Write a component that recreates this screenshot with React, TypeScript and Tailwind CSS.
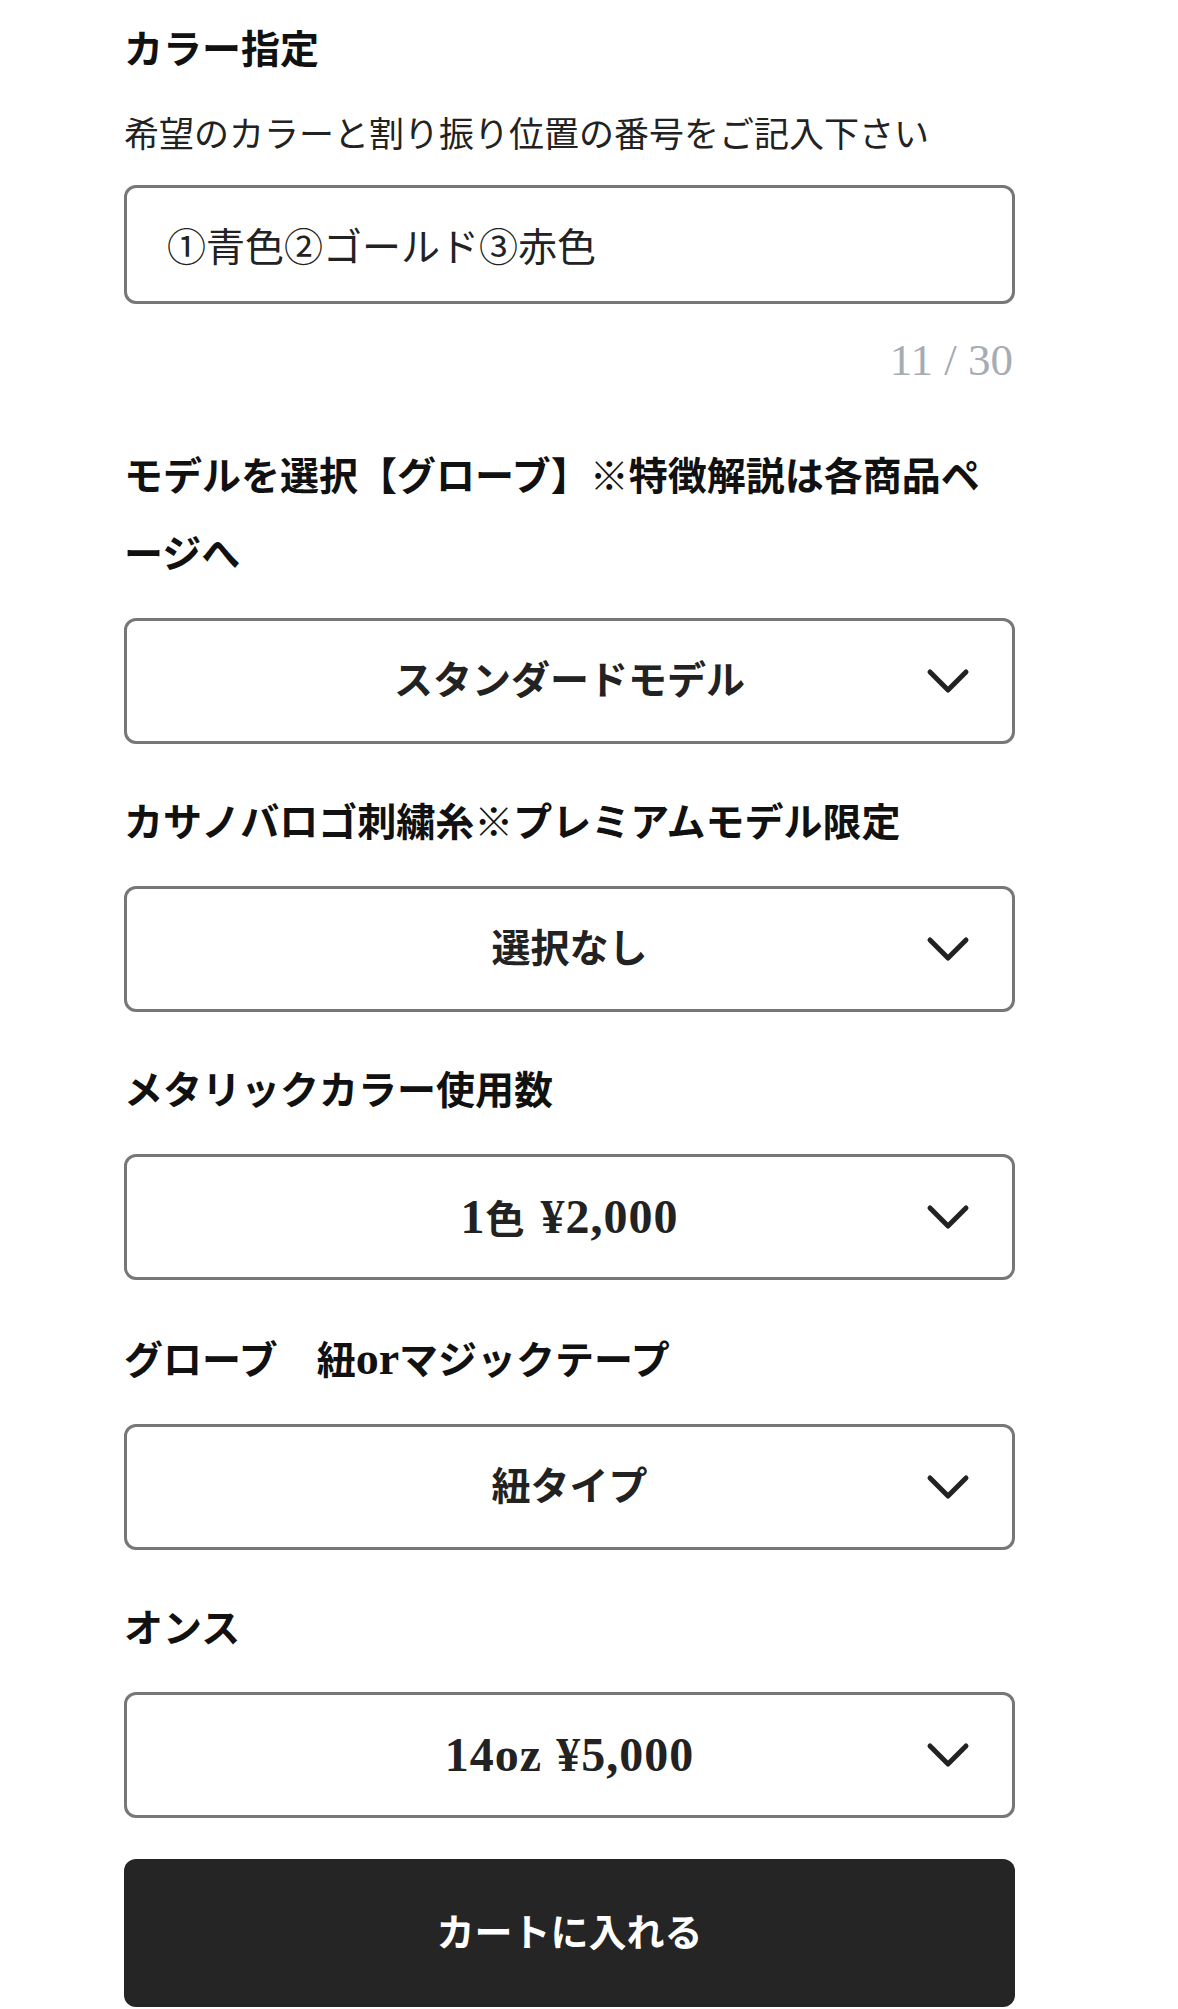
const jp = "font-['Liberation_Serif','Noto_Sans_CJK_JP',serif]";

function Chevron() {
  return (
    <svg width="44" height="26" viewBox="0 0 44 26" className="absolute right-[42px] top-1/2 -translate-y-1/2">
      <polyline points="4,4 22,22 40,4" fill="none" stroke="#222222" strokeWidth="5" strokeLinecap="round" strokeLinejoin="round" />
    </svg>
  );
}

function Label({ children, className = "" }: { children: React.ReactNode; className?: string }) {
  return <p className={`text-[39px] leading-[78px] font-bold text-[#111111] ${className}`}>{children}</p>;
}

function Select({ value }: { value: React.ReactNode }) {
  return (
    <div className="relative mt-[24px] h-[126px] w-full rounded-[12px] border-[3px] border-[#777777] bg-white flex items-center justify-center">
      <span className="text-[39px] font-bold text-[#222222] flex items-baseline">{value}</span>
      <Chevron />
    </div>
  );
}

const latin = "text-[48px] tracking-[1px]";

export default function App() {
  const options = [
    { label: "カサノバロゴ刺繍糸※プレミアムモデル限定", value: "選択なし" },
    {
      label: "メタリックカラー使用数",
      value: (
        <>
          <span className={latin}>1</span>色<span className={`${latin} ml-[16px]`}>¥2,000</span>
        </>
      ),
    },
    {
      label: (
        <>
          グローブ　紐<span className="text-[46px]">or</span>マジックテープ
        </>
      ),
      value: "紐タイプ",
    },
    {
      label: "オンス",
      value: (
        <>
          <span className={latin}>14oz</span>
          <span className={`${latin} ml-[14px]`}>¥5,000</span>
        </>
      ),
    },
  ];

  return (
    <div className={`min-h-[2009px] bg-white ${jp}`}>
      <div className="ml-[124px] w-[891px] pt-[11px]">
        <Label>カラー指定</Label>
        <p className="mt-[17px] text-[35px] leading-[60px] text-[#222222]">希望のカラーと割り振り位置の番号をご記入下さい</p>
        <div className="mt-[19px] h-[119px] w-full rounded-[12px] border-[3px] border-[#777777] flex items-center pl-[40px]">
          <span className="font-['Noto_Sans_CJK_JP',sans-serif] text-[39px] text-[#222222]">①青色②ゴールド③赤色</span>
        </div>
        <p className="mt-[26px] text-right pr-[2px] text-[45px] leading-[60px] text-[#a6abb4]">11 / 30</p>

        <Label className="mt-[48px]">
          モデルを選択【グローブ】※特徴解説は各商品ペ<br />ージへ
        </Label>
        <div className="mt-[2px]">
          <Select value="スタンダードモデル" />
        </div>

        {options.map((o, i) => (
          <div key={i} className="mt-[40px]">
            <Label>{o.label}</Label>
            <Select value={o.value} />
          </div>
        ))}

        <button className="mt-[41px] h-[148px] w-full rounded-[12px] bg-[#252525] flex items-center justify-center">
          <span className="text-[38px] font-bold text-white">カートに入れる</span>
        </button>
      </div>
    </div>
  );
}
